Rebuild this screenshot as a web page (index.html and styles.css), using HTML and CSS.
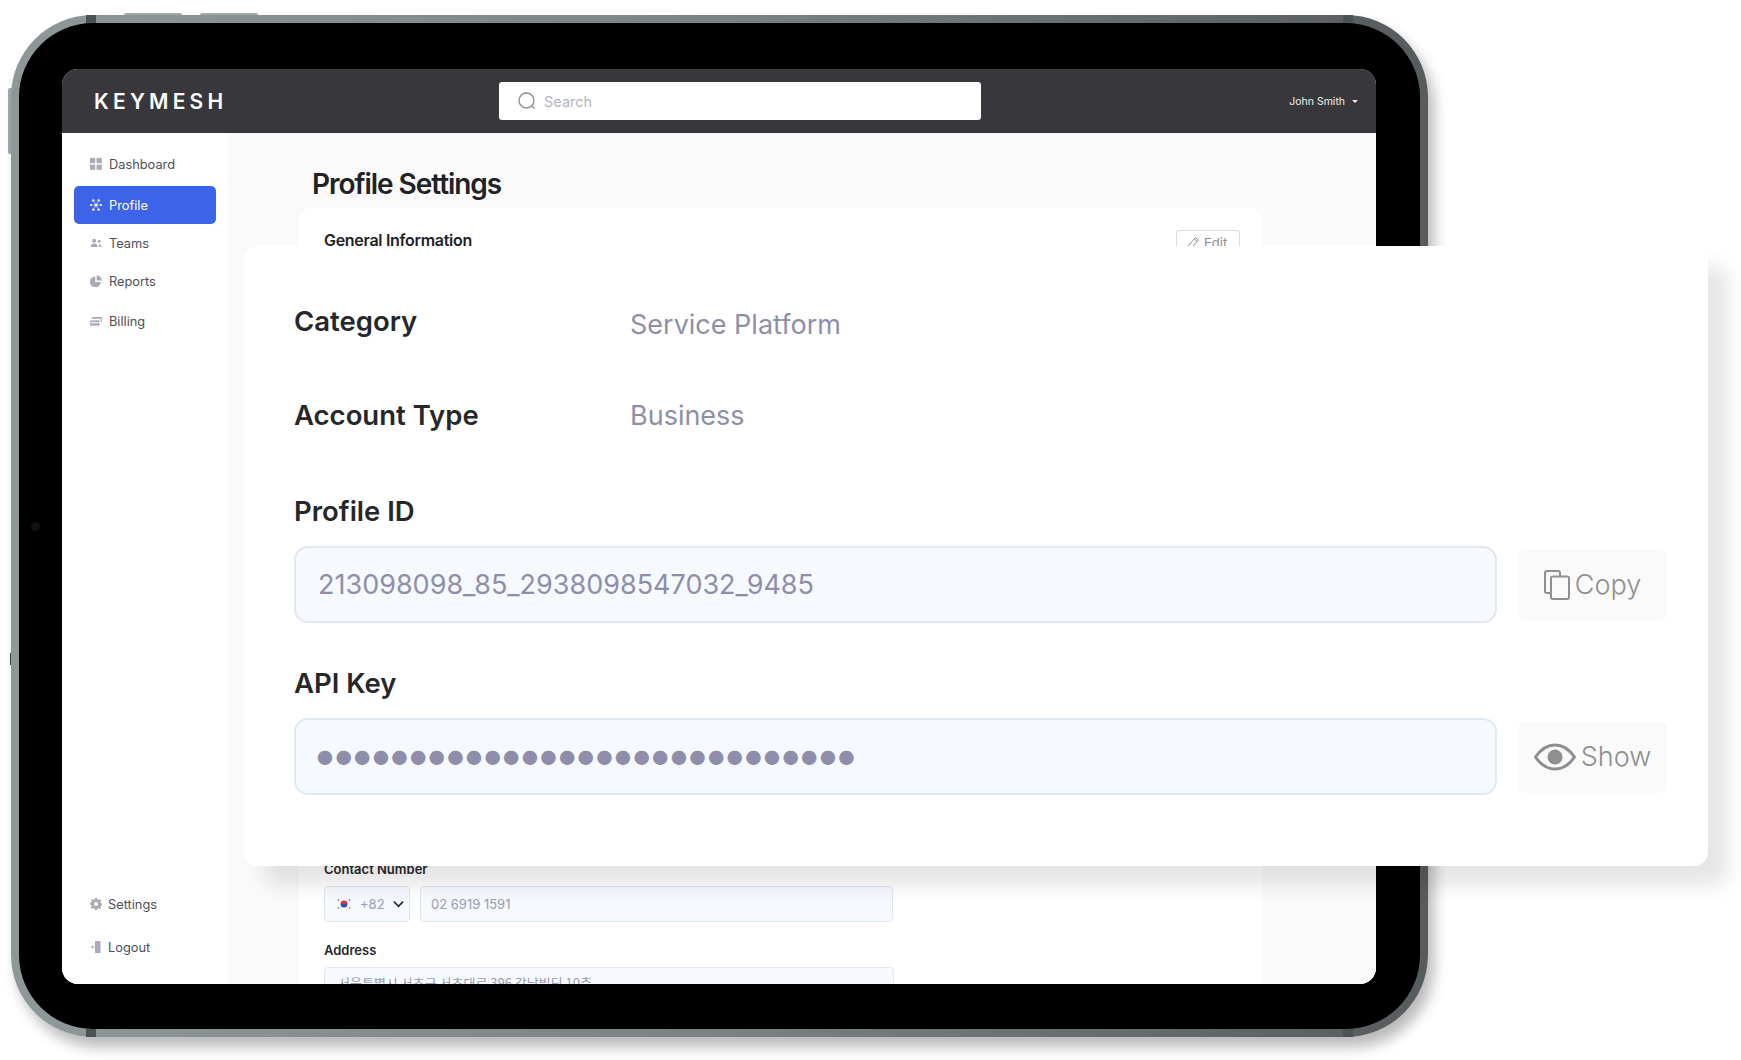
FILE: index.html
```html
<!DOCTYPE html>
<html lang="en">
<head>
    <meta charset="UTF-8">
    <meta name="viewport" content="width=device-width, initial-scale=1.0">
    <title>Keymesh Profile Settings</title>
    <link rel="stylesheet" href="styles.css">
</head>
<body>
    <div class="stage">
        <div class="side-key top-key key-one"></div>
        <div class="side-key top-key key-two"></div>
        <div class="side-key left-key"></div>
        <div class="side-key left-mark"></div>
        <div class="device">
            <div class="band band-tl"></div>
            <div class="band band-tr"></div>
            <div class="band band-bl"></div>
            <div class="band band-br"></div>
            <div class="bezel">
                <div class="camera"></div>
                <div class="screen">
                    <header class="topbar">
                        <div class="logo">KEYMESH</div>
                        <div class="search">
                            <svg class="search-icon" viewBox="0 0 20 20"><circle cx="9.5" cy="9.5" r="7.5"/><path d="M15 15l2.5 2.5"/></svg>
                            <span>Search</span>
                        </div>
                        <div class="user">John Smith <span class="caret"></span></div>
                    </header>
                    <div class="content">
                        <nav class="sidebar">
                            <a class="nav-item">
                                <svg class="nav-icon" viewBox="0 0 12 12"><rect width="5.2" height="5.2"/><rect x="6.6" width="5.2" height="5.2"/><rect y="6.6" width="5.2" height="5.2"/><rect x="6.6" y="6.6" width="5.2" height="5.2"/></svg>
                                Dashboard
                            </a>
                            <a class="nav-item active">
                                <svg class="nav-icon" viewBox="0 0 12 12"><circle cx="6" cy="6" r="1.5"/><circle cx="1" cy="6" r="1.1"/><circle cx="11" cy="6" r="1.1"/><circle cx="3.3" cy="1.400" r="1.2"/><circle cx="8.700" cy="1.400" r="1.2"/><circle cx="3.3" cy="10.600" r="1.2"/><circle cx="8.700" cy="10.600" r="1.2"/><path class="spokes" d="M3.300 1.400l5.400 9.200M8.700 1.400l-5.400 9.200M1 6h10"/></svg>
                                Profile
                            </a>
                            <a class="nav-item">
                                <svg class="nav-icon" viewBox="0 0 12 12"><circle cx="4.2" cy="3.8" r="2"/><path d="M.6 10c0-2.4 1.5-3.6 3.6-3.6S7.8 7.6 7.8 10z"/><circle cx="9.2" cy="4.2" r="1.5"/><path d="M8.8 7c1.6 0 2.7 1 2.7 3H9.2c0-1.200-.2-2.200-.4-3z"/></svg>
                                Teams
                            </a>
                            <a class="nav-item">
                                <svg class="nav-icon" viewBox="0 0 12 12"><path d="M5.300 1.500v5.400h5.400A5.400 5.400 0 1 1 5.300 1.500z"/><path d="M6.700.2A5 5 0 0 1 11.600 5.500H6.700z"/></svg>
                                Reports
                            </a>
                            <a class="nav-item">
                                <svg class="nav-icon" viewBox="0 0 12 12"><rect x="0" y="5.400" width="9.600" height="1.800"/><rect x="0" y="8.200" width="9.600" height="2.400"/><path d="M1.800 3.800V2h10v5.400h-1V3.800z"/></svg>
                                Billing
                            </a>
                            <a class="nav-item nav-bottom">
                                <svg class="nav-icon" viewBox="0 0 12 12"><path fill-rule="evenodd" d="M4.900 0h2.200l.3 1.600 1 .4L9.800 1l1.500 1.500-1 1.400.4 1 1.700.3v2.200l-1.700.3-.4 1 1 1.400L9.800 11l-1.400-1-1 .4-.3 1.600H4.900l-.3-1.600-1-.4-1.400 1L.7 9.500l1-1.400-.4-1L0 6.800V4.600l1.600-.3.4-1-1-1.400L2.300 1l1.400 1 1-.4zM6 3.900a2 2 0 1 0 0 4 2 2 0 0 0 0-4z"/></svg>
                                Settings
                            </a>
                            <a class="nav-item nav-logout">
                                <svg class="nav-icon" viewBox="0 0 12 12"><path d="M5 0h5.500v12H5z"/><path d="M.8 6l2.200-1.800v1.200h1.500v1.200H3v1.200z"/></svg>
                                Logout
                            </a>
                        </nav>
                        <main class="main">
                            <h1 class="page-title">Profile Settings</h1>
                            <section class="card">
                                <div class="card-head">
                                    <h2>General Information</h2>
                                    <button class="edit-btn">
                                        <svg viewBox="0 0 14 14"><path d="M2 12.500l.8-3.500 6.700-7.300 2.800 2.500-6.800 7.300zM8.300 3l2.800 2.500"/></svg>
                                        Edit
                                    </button>
                                </div>
                                <label class="field-label contact-label">Contact Number</label>
                                <div class="phone-row">
                                    <div class="code-box">
                                        <svg class="flag" viewBox="0 0 14 14">
                                            <path d="M3.500 7a3.500 3.500 0 0 1 7 0z" fill="#d8324a"/>
                                            <path d="M3.500 7a3.500 3.500 0 0 0 7 0z" fill="#2c55a8"/>
                                            <g fill="#555"><circle cx="1.500" cy="3" r=".8"/><circle cx="12.500" cy="3" r=".8"/><circle cx="1.500" cy="11" r=".8"/><circle cx="12.500" cy="11" r=".8"/></g>
                                        </svg>
                                        <span>+82</span>
                                        <svg class="chevron" viewBox="0 0 12 8"><path d="M1 1.500l5 5 5-5"/></svg>
                                    </div>
                                    <div class="text-box phone-box">02 6919 1591</div>
                                </div>
                                <label class="field-label address-label">Address</label>
                                <div class="text-box address-box">서울특별시 서초구 서초대로 396 강남빌딩 10층</div>
                            </section>
                        </main>
                    </div>
                </div>
            </div>
        </div>

        <section class="panel">
            <div class="info-row">
                <div class="info-name">Category</div>
                <div class="info-value">Service Platform</div>
            </div>
            <div class="info-row account-row">
                <div class="info-name">Account Type</div>
                <div class="info-value">Business</div>
            </div>
            <div class="key-title id-title">Profile ID</div>
            <div class="key-row">
                <div class="key-box">213098098_85_2938098547032_9485</div>
                <button class="key-btn">
                    <svg class="copy-icon" viewBox="0 0 26 30"><path d="M6 23H3a2 2 0 0 1-2-2V3a2 2 0 0 1 2-2h11a2 2 0 0 1 2 2v3"/><rect x="7" y="6.500" width="18" height="22.500" rx="2"/></svg>
                    Copy
                </button>
            </div>
            <div class="key-title api-title">API Key</div>
            <div class="key-row">
                <div class="key-box dots">•••••••••••••••••••••••••••••</div>
                <button class="key-btn show-btn">
                    <svg class="eye-icon" viewBox="0 0 42 28"><path class="eye-line" d="M1.500 14C7 6 13.500 2 21 2s14 4 19.500 12C35 22 28.500 26 21 26S7 22 1.500 14z"/><circle cx="21" cy="14" r="7.500"/></svg>
                    Show
                </button>
            </div>
        </section>
    </div>
</body>
</html>
```

FILE: styles.css
```css
* {
    box-sizing: border-box;
}
html, body {
    margin: 0;
    padding: 0;
    height: 100%;
    background: #fff;
    overflow: hidden;
}
body {
    font-family: Inter, "Noto Sans", sans-serif;
}
.stage {
    position: relative;
    width: 1741px;
    height: 1060px;
    padding: 15px 0 0 11px;
}

/* tablet frame */
.device {
    position: relative;
    width: 1417px;
    height: 1022px;
    padding: 8px;
    border-radius: 82px;
    background: linear-gradient(90deg, #8f9899 0%, #7b8283 50%, #565c5e 100%);
    box-shadow: 6px 10px 14px rgba(0,0,0,0.28);
}
.bezel {
    position: relative;
    height: 100%;
    padding: 46px 44px 45px 43px;
    border-radius: 74px;
    background: #000;
}
.band {
    position: absolute;
    width: 10px;
    height: 8px;
    background: #4c5254;
}
.band-tl { left: 75px; top: 0; }
.band-tr { right: 75px; top: 0; }
.band-bl { left: 75px; bottom: 0; }
.band-br { right: 75px; bottom: 0; }
.side-key {
    position: absolute;
    background: #a4aaac;
}
.top-key {
    top: 13px;
    height: 3px;
    width: 58px;
    border-radius: 2px 2px 0 0;
}
.key-one { left: 124px; }
.key-two { left: 200px; }
.left-key {
    left: 8px;
    top: 88px;
    width: 4px;
    height: 66px;
    border-radius: 2px 0 0 2px;
}
.left-mark {
    left: 10px;
    top: 653px;
    width: 3px;
    height: 12px;
    background: #3f4446;
}
.camera {
    position: absolute;
    left: 12px;
    top: 499px;
    width: 9px;
    height: 9px;
    border-radius: 50%;
    background: #101214;
}
.screen {
    display: flex;
    flex-direction: column;
    height: 100%;
    border-radius: 16px;
    overflow: hidden;
    background: #fff;
}

/* top bar */
.topbar {
    display: flex;
    align-items: center;
    flex: none;
    height: 64px;
    padding: 0 18px 0 32px;
    background: #38383c;
}
.logo {
    width: 405px;
    color: #fff;
    font-size: 21px;
    font-weight: 600;
    letter-spacing: 4.200px;
}
.search {
    display: flex;
    align-items: center;
    width: 482px;
    height: 38px;
    padding-left: 18px;
    border-radius: 3px;
    background: #fff;
    color: #b4b4c0;
    font-size: 14.500px;
}
.search-icon {
    width: 20px;
    height: 20px;
    margin-right: 7px;
    fill: none;
    stroke: #8c8c94;
    stroke-width: 1.3;
}
.user {
    margin-left: auto;
    color: #eee;
    font-size: 10.500px;
}
.caret {
    display: inline-block;
    margin-left: 4px;
    vertical-align: 2px;
    border-left: 3px solid transparent;
    border-right: 3px solid transparent;
    border-top: 3.500px solid #eee;
}

/* sidebar */
.content {
    display: flex;
    flex: 1;
    min-height: 0;
}
.sidebar {
    display: flex;
    flex-direction: column;
    flex: none;
    width: 166px;
    padding: 12px 12px 18px 12px;
    background: #fff;
}
.nav-item {
    display: flex;
    align-items: center;
    flex: none;
    height: 38px;
    padding-left: 16px;
    border-radius: 5px;
    color: #4e4e56;
    font-size: 12.800px;
}
.nav-icon {
    width: 12px;
    height: 12px;
    margin-right: 7px;
    fill: #aaaab5;
}
.active {
    margin-top: 3px;
    background: #3d63e8;
    color: #fff;
}
.active .nav-icon {
    fill: #fff;
}
.spokes {
    fill: none;
    stroke: #fff;
    stroke-width: .5;
}
.nav-item:nth-child(5) {
    margin-top: 2px;
}
.nav-bottom {
    margin-top: auto;
}
.nav-bottom .nav-icon, .nav-logout .nav-icon {
    margin-right: 6px;
}
.nav-logout {
    margin-top: 5px;
}

/* page behind the panel */
.main {
    flex: 1;
    min-width: 0;
    padding: 33px 114px 0 71px;
    background: #fafafa;
    overflow: hidden;
}
.page-title {
    margin: 0 0 6px 13px;
    color: #222226;
    font-size: 28px;
    line-height: 36px;
    font-weight: 600;
    letter-spacing: -1.050px;
}
.card {
    height: 900px;
    padding: 22px 22px 0 25px;
    border-radius: 12px;
    background: #fff;
}
.card-head {
    display: flex;
    align-items: flex-start;
    justify-content: space-between;
}
.card-head h2 {
    margin: 0;
    color: #222226;
    font-size: 16px;
    line-height: 20px;
    font-weight: 600;
    letter-spacing: -0.3px;
}
.edit-btn {
    display: flex;
    align-items: center;
    gap: 4px;
    height: 24px;
    width: 64px;
    padding: 0 0 0 9px;
    border: 1px solid #ddd;
    border-bottom: none;
    border-radius: 3px 3px 0 0;
    background: #fff;
    color: #8c8c8c;
    font-family: Inter, sans-serif;
    font-size: 13px;
}
.edit-btn svg {
    width: 14px;
    height: 14px;
    fill: none;
    stroke: #8c8c8c;
}
.field-label {
    display: block;
    color: #28282c;
    font-size: 13px;
    line-height: 16px;
    font-weight: 600;
}
.contact-label {
    margin-top: 607px;
}
.phone-row {
    display: flex;
    gap: 10px;
    margin-top: 9px;
}
.code-box, .text-box {
    height: 36px;
    border: 1px solid #dfe7f1;
    border-radius: 4px;
    background: #f6f9fe;
    color: #9a9ab2;
    font-size: 13px;
}
.code-box {
    display: flex;
    align-items: center;
    width: 86px;
    padding-left: 12px;
}
.flag {
    width: 14px;
    height: 14px;
    margin-right: 9px;
}
.chevron {
    width: 11px;
    height: 8px;
    margin-left: 8px;
    fill: none;
    stroke: #28282c;
    stroke-width: 1.800;
}
.text-box {
    display: flex;
    align-items: center;
    width: 473px;
    padding-left: 10px;
}
.address-label {
    margin-top: 20px;
}
.address-box {
    align-items: flex-start;
    margin-top: 9px;
    width: 570px;
    padding: 6px 0 0 13px;
    font-family: "Noto Sans CJK KR", Inter, sans-serif;
    font-size: 13px;
    line-height: 18px;
}

/* floating panel */
.panel {
    position: absolute;
    left: 244px;
    top: 246px;
    width: 1464px;
    height: 620px;
    padding: 45px 37px 0 50px;
    border-radius: 14px;
    background: #fff;
    box-shadow: 20px 20px 20px rgba(0,0,0,0.1);
}
.info-row {
    display: flex;
    align-items: center;
    height: 60px;
}
.account-row {
    margin-top: 34px;
}
.info-name {
    width: 336px;
    color: #27272a;
    font-size: 27.500px;
    font-weight: 600;
}
.info-value {
    color: #8e8eaa;
    font-size: 27px;
    padding-top: 7px;
}
.account-row .info-value {
    padding-top: 0;
}
.key-title {
    color: #27272a;
    font-size: 27.500px;
    line-height: 36px;
    font-weight: 600;
}
.id-title {
    margin-top: 48px;
}
.api-title {
    margin-top: 42px;
}
.key-row {
    display: flex;
    align-items: center;
    gap: 21px;
    margin-top: 17px;
}
.key-box {
    display: flex;
    align-items: center;
    flex: none;
    width: 1203px;
    height: 77px;
    padding-left: 22px;
    border: 2px solid #e0e8f2;
    border-radius: 14px;
    background: #f6f9fe;
    color: #8e8eaa;
    font-size: 27px;
}
.dots {
    padding: 0 0 6px 16px;
    font-size: 46px;
    letter-spacing: -7.250px;
    line-height: 1;
}
.key-btn {
    display: flex;
    align-items: center;
    justify-content: center;
    gap: 5px;
    width: 149px;
    height: 72px;
    padding: 0;
    border: none;
    border-radius: 8px;
    background: #fafafa;
    color: #8f8f8f;
    font-family: Inter, sans-serif;
    font-size: 27px;
    font-weight: 300;
}
.copy-icon {
    width: 26px;
    height: 30px;
    fill: none;
    stroke: #8f8f8f;
    stroke-width: 2;
}
.eye-icon {
    width: 42px;
    height: 28px;
    fill: #8f8f8f;
}
.eye-line {
    fill: none;
    stroke: #8f8f8f;
    stroke-width: 3;
}
```
